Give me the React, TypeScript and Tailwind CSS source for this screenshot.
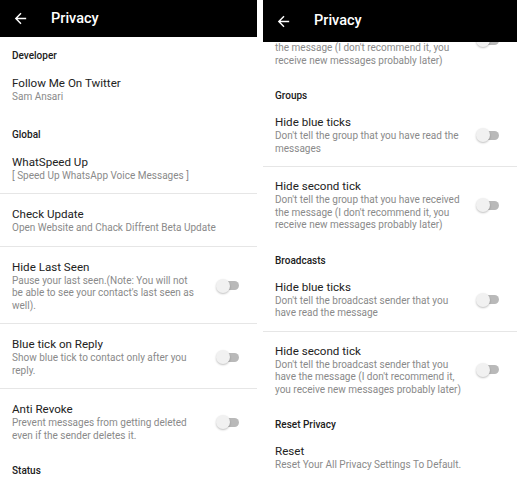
import React from "react";

const font = { fontFamily: "Roboto, 'Noto Sans', Arial, sans-serif" };

function Arrow() {
  return (
    <svg width="17" height="17" viewBox="0 0 24 24" fill="white">
      <path d="M20 11H7.83l5.59-5.59L12 4l-8 8 8 8 1.41-1.41L7.83 13H20v-2z" />
    </svg>
  );
}

function Toggle({ className = "" }: { className?: string }) {
  return (
    <div className={`relative w-[23px] h-[14px] shrink-0 ${className}`}>
      <div className="absolute left-[4px] right-0 top-[2.5px] h-[9px] rounded-full bg-[#b9b9b9]" />
      <div className="absolute left-0 top-0 w-[14px] h-[14px] rounded-full bg-[#f1f1f1] shadow-[0_1px_2px_rgba(0,0,0,0.25)]" />
    </div>
  );
}

function Header({ h }: { h: string }) {
  return (
    <div className={`${h} bg-black flex items-center shrink-0`}>
      <div className="w-[51px] pl-[12px] flex items-center">
        <Arrow />
      </div>
      <div className="text-white text-[14.5px] font-medium">Privacy</div>
    </div>
  );
}

function Category({ label, pt }: { label: string; pt: string }) {
  return (
    <div className={`${pt} pl-[12px] text-[10px] leading-[14px] font-medium text-[#202020]`}>
      {label}
    </div>
  );
}

function Item({
  title,
  lines,
  toggle,
  divider,
  pt,
}: {
  title: string;
  lines: string[];
  toggle?: boolean;
  divider?: boolean;
  pt: string;
}) {
  return (
    <div className={divider ? "border-t border-[#e6e6e6]" : ""}>
      <div className={`flex items-center pl-[12px] pr-[18px] ${pt} pb-[11px]`}>
        <div className="flex-1 min-w-0">
          <div className="text-[11.6px] leading-[15px] text-[#222222]">{title}</div>
          <div className="text-[10px] leading-[12.5px] text-[#8a8a8a]">
            {lines.map((l, i) => (
              <div key={i} className="whitespace-nowrap">
                {l}
              </div>
            ))}
          </div>
        </div>
        {toggle && <Toggle />}
      </div>
    </div>
  );
}

export default function App() {
  const L = "pt-[13px]";
  const R = "pt-[12px]";
  return (
    <div className="w-[517px] h-[480px] bg-white flex overflow-hidden" style={font}>
      {/* Left screen */}
      <div className="w-[257px] h-[480px] flex flex-col overflow-hidden">
        <Header h="h-[37px]" />
        <div className="flex-1 overflow-hidden">
          <Category pt="pt-[12px]" label="Developer" />
          <Item pt={L} title="Follow Me On Twitter" lines={["Sam Ansari"]} />
          <Category pt="pt-[13px]" label="Global" />
          <Item pt={L} title="WhatSpeed Up" lines={["[ Speed Up WhatsApp Voice Messages ]"]} />
          <Item
            pt={L}
            divider
            title="Check Update"
            lines={["Open Website and Chack Diffrent Beta Update"]}
          />
          <Item
            pt={L}
            divider
            toggle
            title="Hide Last Seen"
            lines={[
              "Pause your last seen.(Note: You will not",
              "be able to see your contact's last seen as",
              "well).",
            ]}
          />
          <Item
            pt={L}
            divider
            toggle
            title="Blue tick on Reply"
            lines={["Show blue tick to contact only after you", "reply."]}
          />
          <Item
            pt={L}
            divider
            toggle
            title="Anti Revoke"
            lines={["Prevent messages from getting deleted", "even if the sender deletes it."]}
          />
          <Category pt="pt-[11px]" label="Status" />
        </div>
      </div>

      <div className="w-[6px] shrink-0" />

      {/* Right screen */}
      <div className="w-[254px] h-[480px] flex flex-col overflow-hidden">
        <Header h="h-[42px]" />
        <div className="flex-1 overflow-hidden">
          <div className="flex items-start pl-[12px] pr-[18px] pb-[11px]">
            <div className="flex-1 min-w-0 text-[10px] leading-[12.5px] text-[#8a8a8a]">
              <div className="whitespace-nowrap">the message (I don't recommend it, you</div>
              <div className="whitespace-nowrap">receive new messages probably later)</div>
            </div>
            <Toggle className="-mt-[9px]" />
          </div>
          <Category pt="pt-[11px]" label="Groups" />
          <Item
            pt={R}
            toggle
            title="Hide blue ticks"
            lines={["Don't tell the group that you have read the", "messages"]}
          />
          <Item
            pt={R}
            divider
            toggle
            title="Hide second tick"
            lines={[
              "Don't tell the group that you have received",
              "the message (I don't recommend it, you",
              "receive new messages probably later)",
            ]}
          />
          <Category pt="pt-[11px]" label="Broadcasts" />
          <Item
            pt={R}
            toggle
            title="Hide blue ticks"
            lines={["Don't tell the broadcast sender that you", "have read the message"]}
          />
          <Item
            pt={R}
            divider
            toggle
            title="Hide second tick"
            lines={[
              "Don't tell the broadcast sender that you",
              "have the message (I don't recommend it,",
              "you receive new messages probably later)",
            ]}
          />
          <Category pt="pt-[11px]" label="Reset Privacy" />
          <Item pt={R} title="Reset" lines={["Reset Your All Privacy Settings To Default."]} />
        </div>
      </div>
    </div>
  );
}
